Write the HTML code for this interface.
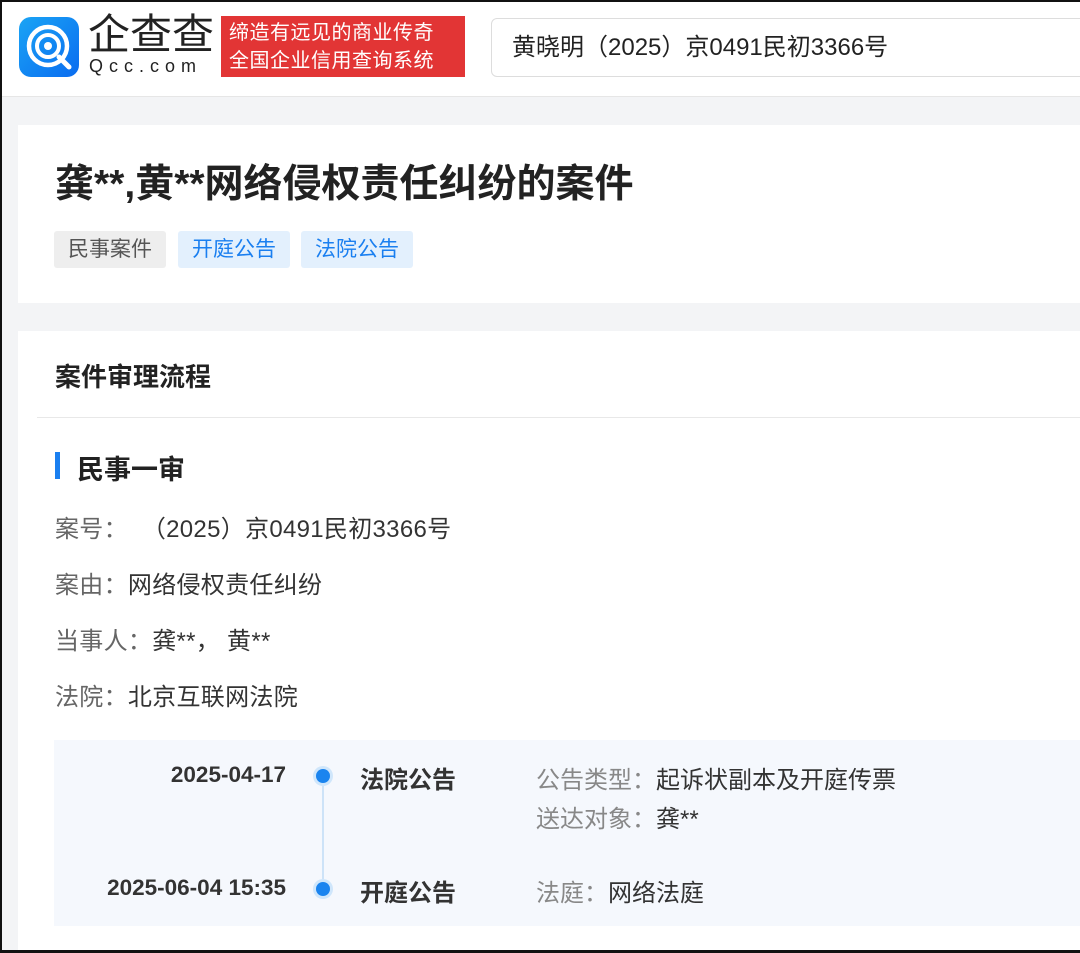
<!DOCTYPE html>
<html><head><meta charset="utf-8"><style>
*{margin:0;padding:0;box-sizing:border-box}
html,body{width:1080px;height:953px;overflow:hidden}
body{background:#f3f4f6;font-family:"Liberation Sans","Noto Sans CJK SC",sans-serif;position:relative;color:#333}
.frame{position:absolute;inset:0;border:2px solid #111;border-right:none;z-index:10;pointer-events:none}
.hdr{position:absolute;left:0;top:0;width:1080px;height:97px;background:#fff;border-bottom:1px solid #e6e6e6}
.logo{position:absolute;left:19px;top:17px;width:60px;height:60px;border-radius:12px;background:linear-gradient(135deg,#1aa4f5,#0a6cf0)}
.brand{position:absolute;left:88px;top:12px;font-size:42px;font-weight:normal;color:#222;letter-spacing:0px;line-height:46px}
.qcc{position:absolute;left:89px;top:56px;font-size:18px;color:#222;letter-spacing:6px}
.slogan{position:absolute;left:221px;top:16px;width:244px;height:61px;background:#e23535;color:#fff;font-size:20px;line-height:28px;padding:3px 0 0 8px;letter-spacing:0.5px}
.search{position:absolute;left:491px;top:18px;width:600px;height:59px;border:1px solid #ddd;border-radius:6px;font-size:24px;line-height:57px;padding-left:20px;color:#222}
.card{position:absolute;left:18px;width:1070px;background:#fff}
.t1{position:absolute;left:55px;top:160px;font-size:39px;font-weight:bold;color:#222;line-height:50px}
.tag{position:absolute;top:231px;height:37px;line-height:37px;font-size:21px;padding:0 14px;border-radius:3px}
.sec{position:absolute;left:55px;top:357px;font-size:26px;font-weight:bold;color:#222}
.div{position:absolute;left:37px;top:417px;width:1050px;height:1px;background:#e8e8e8}
.bar{position:absolute;left:55px;top:452px;width:5px;height:27px;background:#1a7ff0}
.h2{position:absolute;left:77px;top:448px;font-size:27px;font-weight:bold;color:#222}
.row{position:absolute;left:55px;font-size:24px;color:#333;letter-spacing:0.3px}
.row span{color:#666}
.tl{position:absolute;left:54px;top:740px;width:1030px;height:186px;background:#f5f8fd}
.date{position:absolute;right:794px;font-size:22.5px;font-weight:bold;color:#333}
.dot{position:absolute;left:316px;width:14px;height:14px;border-radius:50%;background:#1a84ef;box-shadow:0 0 0 3px #cfe6fb}
.line{position:absolute;left:322px;top:784px;width:2px;height:105px;background:#cde3f8}
.ev{position:absolute;left:360px;font-size:24px;font-weight:bold;color:#333}
.info{position:absolute;left:536px;font-size:24px;color:#333}
.info span{color:#888}
</style></head><body>
<div class="frame"></div>
<div class="hdr">
<div class="logo"><svg width="60" height="60" viewBox="0 0 60 60"><circle cx="29" cy="29" r="19" fill="none" stroke="#fff" stroke-width="4.5"/><circle cx="29" cy="29" r="11" fill="none" stroke="#fff" stroke-width="4"/><circle cx="29" cy="29" r="4" fill="#fff"/><path d="M40 40 L50 50" stroke="#fff" stroke-width="5" stroke-linecap="round"/></svg></div>
<div class="brand">企查查</div>
<div class="qcc">Qcc.com</div>
<div class="slogan">缔造有远见的商业传奇<br>全国企业信用查询系统</div>
<div class="search">黄晓明（2025）京0491民初3366号</div>
</div>
<div class="card" style="top:125px;height:178px"></div>
<div class="t1">龚**,黄**网络侵权责任纠纷的案件</div>
<div class="tag" style="left:54px;background:#eee;color:#555">民事案件</div>
<div class="tag" style="left:178px;background:#e3f0fd;color:#1a7ff0">开庭公告</div>
<div class="tag" style="left:301px;background:#e3f0fd;color:#1a7ff0">法院公告</div>
<div class="card" style="top:331px;height:640px"></div>
<div class="sec">案件审理流程</div>
<div class="div"></div>
<div class="bar"></div>
<div class="h2">民事一审</div>
<div class="row" style="top:509px"><span>案号：</span>&nbsp;&nbsp;（2025）京0491民初3366号</div>
<div class="row" style="top:565px"><span>案由：</span>网络侵权责任纠纷</div>
<div class="row" style="top:621px"><span>当事人：</span>龚**， 黄**</div>
<div class="row" style="top:677px"><span>法院：</span>北京互联网法院</div>
<div class="tl"></div>
<div class="line"></div>
<div class="date" style="top:762px">2025-04-17</div>
<div class="dot" style="top:769px"></div>
<div class="ev" style="top:760px">法院公告</div>
<div class="info" style="top:760px"><span>公告类型：</span>起诉状副本及开庭传票</div>
<div class="info" style="top:799px"><span>送达对象：</span>龚**</div>
<div class="date" style="top:875px">2025-06-04 15:35</div>
<div class="dot" style="top:882px"></div>
<div class="ev" style="top:873px">开庭公告</div>
<div class="info" style="top:873px"><span>法庭：</span>网络法庭</div>
<div style="position:absolute;left:0;top:950px;width:1080px;height:3px;background:#111"></div>
</body></html>
